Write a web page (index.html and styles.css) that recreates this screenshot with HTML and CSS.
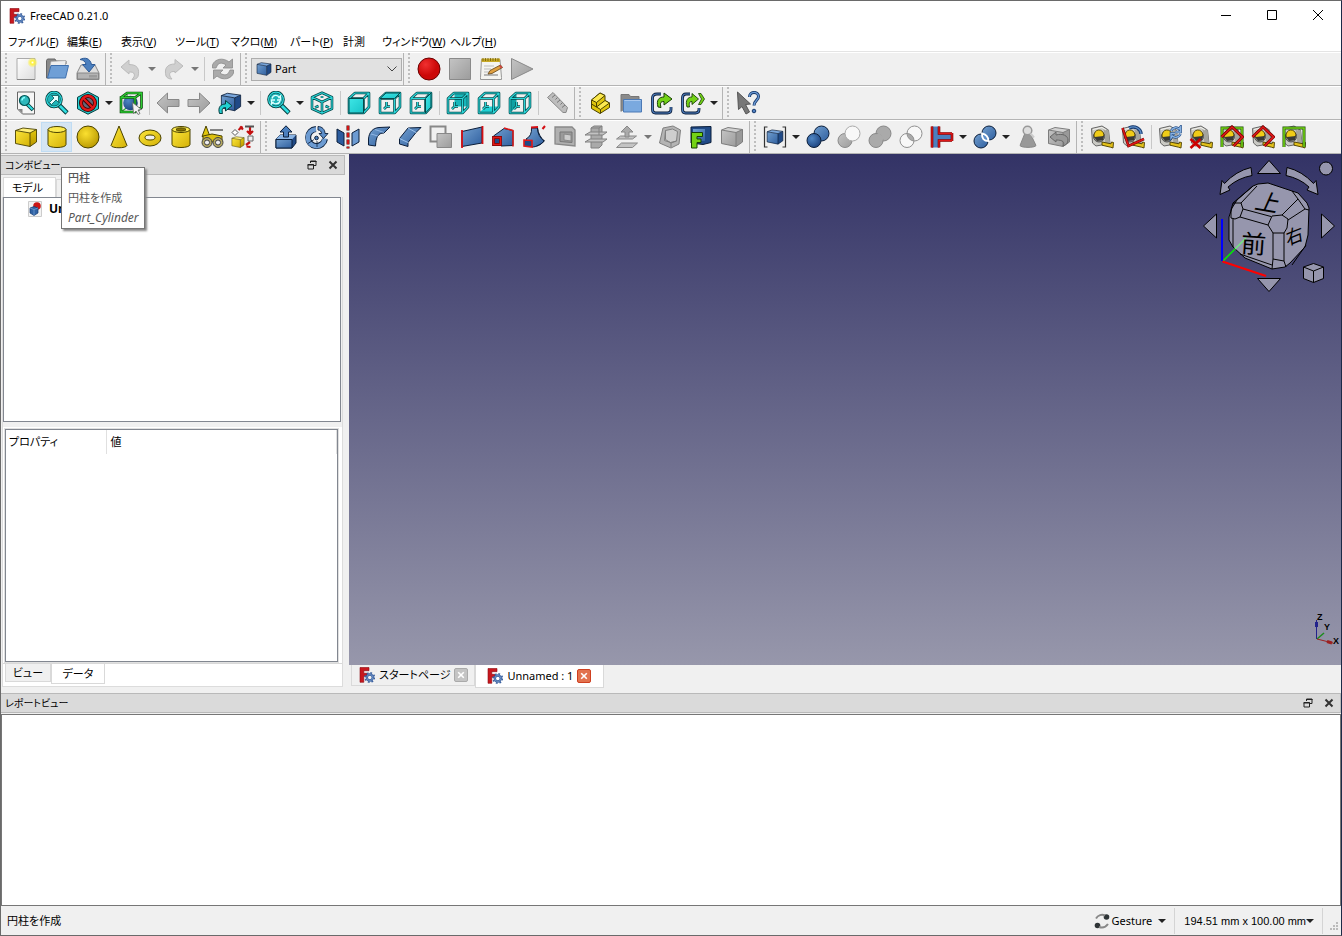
FILE: index.html
```
<!DOCTYPE html>
<html lang="ja">
<head>
<meta charset="utf-8">
<title>FreeCAD 0.21.0</title>
<link rel="stylesheet" href="styles.css">
</head>
<body>
<svg class="defs" aria-hidden="true">
<defs>
<linearGradient id="gy" x2="1" y2="1"><stop stop-color="#fbe63c"/><stop offset="1" stop-color="#d4b106"/></linearGradient>
<linearGradient id="gyd" x2="0" y2="1"><stop stop-color="#e0c60c"/><stop offset="1" stop-color="#b89600"/></linearGradient>
<linearGradient id="gb" x2="1" y2="1"><stop stop-color="#729fcf"/><stop offset="1" stop-color="#2f5f9f"/></linearGradient>
<linearGradient id="gg" x2="1" y2="1"><stop stop-color="#c4c4c4"/><stop offset="1" stop-color="#9c9c9c"/></linearGradient>
<linearGradient id="gt" x2="1" y2="1"><stop stop-color="#3ee6e6"/><stop offset="1" stop-color="#18c4c8"/></linearGradient>
<linearGradient id="gw" x2="1" y2="1"><stop stop-color="#fff"/><stop offset="1" stop-color="#ddd"/></linearGradient>
<radialGradient id="gr" cx=".35" cy=".3"><stop stop-color="#f03030"/><stop offset="1" stop-color="#cc0808"/></radialGradient>
<radialGradient id="sy" cx=".4" cy=".35" r=".7"><stop stop-color="#fbe030"/><stop offset="1" stop-color="#b89800"/></radialGradient>
<radialGradient id="sb" cx=".35" cy=".35" r=".7"><stop stop-color="#4f86c4"/><stop offset="1" stop-color="#1d4480"/></radialGradient>
<radialGradient id="glow"><stop stop-color="#fff"/><stop offset=".35" stop-color="#fff23a"/><stop offset="1" stop-color="#fff23a" stop-opacity=".1"/></radialGradient>
</defs>
<symbol id="logo" viewBox="0 0 16 16"><path d="M1 .5h9v3.200H4.800v2.600H8v3H4.800v6H1z" fill="#c8171e" stroke="#8a0a10" stroke-width=".6"/><g fill="none" stroke="#3c62a0"><circle cx="10.800" cy="10.500" r="3" stroke-width="2.400"/><circle cx="10.800" cy="10.500" r="4.700" stroke-width="1.500" stroke-dasharray="1.800 1.890"/></g><circle cx="10.800" cy="10.500" r="3" fill="none" stroke="#6c92c8" stroke-width="1"/></symbol>
<symbol id="new" viewBox="0 0 24 24"><path d="M3 1.500h18v21H3z" fill="url(#gw)" stroke="#aaa"/><path d="M3 22.500h18" stroke="#888"/><circle cx="18.500" cy="5.500" r="5" fill="url(#glow)"/></symbol>
<symbol id="open" viewBox="0 0 24 24"><path d="M1.500 3.500v17.500h3l3-14h13.500v-3H11l-1-2H2.500z" fill="#888" stroke="#666"/><path d="M6 4.500l15-1-1 6H5z" fill="#eee" stroke="#aaa" stroke-width=".6"/><path d="M6 8.500h17.500l-3 12.500H2.500z" fill="#6f9fd6" stroke="#3f70ae"/></symbol>
<symbol id="save" viewBox="0 0 24 24"><path d="M5 8h14l4 8v6.500H1V16z" fill="#ddd" stroke="#888"/><path d="M1.500 16h21v6h-21z" fill="#b4b4b4" stroke="#888"/><path d="M14 18v2.500m2-2.500v2.500m2-2.500v2.500m2-2.500v2.500" stroke="#777" stroke-width=".8"/><path d="M4 2.500c5-2.500 10-1.500 11.500 5H19l-6 7.500-6.500-7.500H10C9.500 4.500 7.500 3 4 2.500z" fill="#4b7fbe" stroke="#2d5a96"/></symbol>
<symbol id="undo" viewBox="0 0 24 24"><path d="M2 10l8-7v4.500c8 0 11 4 9 12-1 2-3 3-6 3 4-4 3-8-3-7.500V17z" fill="#cfcfcf" stroke="#bbb"/></symbol>
<symbol id="redo" viewBox="0 0 24 24"><path d="M21 9l-8-6.500V7C5 7 2 11.500 4 19c1 2 3 3 6 3-4-4-3-8 3-7.500V16z" fill="#cfcfcf" stroke="#bbb"/></symbol>
<symbol id="refresh" viewBox="0 0 24 24"><g fill="#aaa" stroke="#8a8a8a" stroke-width=".8"><path d="M1.500 11V8C3.500 2 12 0 18 5l3.500-3v9H12l3-3C11 5 7 6 6 9l-1 2z"/><path d="M22.500 13v3C20.500 22 12 24 6 19l-3.500 3v-9H12l-3 3c4 3 8 2 9-1l1-2z"/></g></symbol>
<symbol id="rec" viewBox="0 0 24 24"><circle cx="12" cy="12" r="11" fill="url(#gr)" stroke="#6a0000"/></symbol>
<symbol id="stop" viewBox="0 0 24 24"><path d="M1.500 1.500h21v21h-21z" fill="url(#gg)" stroke="#8a8a8a"/></symbol>
<symbol id="note" viewBox="0 0 24 24"><path d="M2.500 2.500h18.500l1.500 18v2h-21v-2z" fill="#f4f4f0" stroke="#999"/><path d="M2.500 1.500H21v3.500H2.500z" fill="#c8aa28"/><path d="M4 1v3m2.500-3v3M9 1v3m2.500-3v3M14 1v3m2.500-3v3M19 1v3" stroke="#665300" stroke-width=".7"/><path d="M5 9h10M5 12h7M5 15h5" stroke="#bbb"/><path d="M5 18h14" stroke="#777"/><path d="M9 17l2-3.500L21.500 8l2 2.500L13 16.500z" fill="#e0a040" stroke="#604010" stroke-width=".8"/><path d="M20 9l1.500-1 2 2.500-1.500 1z" fill="#c44"/></symbol>
<symbol id="play" viewBox="0 0 24 24"><path d="M1.500 1.500L23 12 1.500 22.500z" fill="url(#gg)" stroke="#8a8a8a"/></symbol>
<symbol id="mag" viewBox="0 0 24 24"><path d="M14.500 14.500l7.500 7.500" stroke="#053c3d" stroke-width="4.600"/><path d="M14.500 14.500l7 7" stroke="#2fdde0" stroke-width="2.600"/><circle cx="9" cy="8.500" r="7.500" fill="#1fb4b8" stroke="#053c3d" stroke-width="2.600"/><circle cx="9" cy="8.500" r="7.300" fill="none" stroke="#2fdde0" stroke-width="1.300"/></symbol>
<symbol id="fitall" viewBox="0 0 24 24"><path d="M3.500 1h17v22H8.500l-5-5z" fill="#f6f6f6" stroke="#666"/><path d="M4 18h4.500v4.500z" fill="#888"/><path d="M13 13l6 6" stroke="#053c3d" stroke-width="3.800"/><path d="M13 13l5.500 5.500" stroke="#2fdde0" stroke-width="2"/><circle cx="10.500" cy="9.500" r="5" fill="#2fb8bc" stroke="#055" stroke-width="1.200"/><path d="M8 9.500a3 3 0 013-3" stroke="#8ff" stroke-width="1.500" fill="none"/></symbol>
<symbol id="fitsel" viewBox="0 0 24 24"><use href="#mag"/><path d="M4.500 11.500l4.500-4.500-2.500-2.500h7v7L11 9l-4.500 4.500z" fill="#e8ffff" stroke="#055" stroke-width=".8"/></symbol>
<symbol id="magsync" viewBox="0 0 24 24"><use href="#mag"/><path d="M5 7.500c1-4 6-4 7-1l1.500-1.500v4H10M13 10c-1 3.500-6 3.500-7 1.500l-1.500 1.500V9H8" fill="none" stroke="#dff" stroke-width="1.400"/></symbol>
<symbol id="nodraw" viewBox="0 0 24 24"><path d="M12 .8l10.500 5.500v11.500L12 23.200 1.500 17.800V6.300z" fill="#25cdd0" stroke="#053c3d"/><circle cx="12" cy="12" r="7" fill="#667" stroke="#300" stroke-width="4"/><path d="M7 7l10 10" stroke="#300" stroke-width="4"/><circle cx="12" cy="12" r="7" fill="none" stroke="#e01818" stroke-width="2.400"/><path d="M7 7l10 10" stroke="#e01818" stroke-width="2.400"/></symbol>
<symbol id="bbox" viewBox="0 0 24 24"><path d="M8 2v14.500h14M8 16.500L2 21" fill="none" stroke="#26b32a" stroke-width="1.200"/><circle cx="11.500" cy="12" r="7.300" fill="url(#sb)"/><g fill="none"><path d="M2 6.500h14V21H2zM2 6.500L8 2h14.500v14.500L16 21M16 6.500L22.500 2" stroke="#063d06" stroke-width="2.600"/><path d="M2 6.500h14V21H2zM2 6.500L8 2h14.500v14.500L16 21M16 6.500L22.500 2" stroke="#2ccc32" stroke-width="1.300"/></g><path d="M13.500 11.500l9 7-3.500.5 2 3.500-2 1-2-3.500-2.500 2.500z" fill="#f4f4f4" stroke="#666" stroke-width=".8"/></symbol>
<symbol id="left" viewBox="0 0 24 24"><path d="M1 12L11.500 2v6.500H23v7H11.500V22z" fill="url(#gg)" stroke="#888"/></symbol>
<symbol id="right" viewBox="0 0 24 24"><path d="M23 12L12.500 2v6.500H1v7h11.500V22z" fill="url(#gg)" stroke="#888"/></symbol>
<symbol id="bcube" viewBox="0 0 24 24"><path d="M1.500 5L8 2.500l14.500 2-6.500 3z" fill="#7aa7dc"/><path d="M1.500 5L16 7.500v14l-14.500-3z" fill="url(#gb)"/><path d="M16 7.500l6.500-3V17L16 21.500z" fill="#204a87"/><path d="M1.500 5L8 2.500l14.500 2V17L16 21.500l-14.500-3zM1.500 5L16 7.500v14M16 7.500l6.500-3" fill="none" stroke="#0b1e3a" stroke-width=".9"/></symbol>
<symbol id="ycube" viewBox="0 0 24 24"><path d="M1.500 5.500L9 3l13.500 1.500L16 8z" fill="#fff07a"/><path d="M1.500 5.500L16 8v13.500l-14.500-3z" fill="url(#gy)"/><path d="M16 8l6.500-3.500v12.500L16 21.500z" fill="url(#gyd)"/><path d="M1.500 5.500L9 3l13.500 1.500v12.500L16 21.500l-14.500-3zM1.500 5.500L16 8v13.500M16 8l6.500-3.500" fill="none" stroke="#4a4200" stroke-width=".9"/></symbol>
<symbol id="gcube" viewBox="0 0 24 24"><path d="M1.500 5L8 2.500l14.500 2-6.500 3z" fill="#d2d2d2"/><path d="M1.500 5L16 7.500v14l-14.500-3z" fill="url(#gg)"/><path d="M16 7.500l6.500-3V17L16 21.500z" fill="#999"/><path d="M1.500 5L8 2.500l14.500 2V17L16 21.500l-14.500-3zM1.500 5L16 7.500v14M16 7.500l6.500-3" fill="none" stroke="#7d7d7d"/></symbol>
<symbol id="linknav" viewBox="0 0 24 24"><use href="#bcube" x="2" y="0" width="22" height="22"/><path d="M1.500 22.500C-.5 16 3 13 7.500 13V9.500l6.500 5.300-6.500 5.200v-3.500c-3 0-4 2-3 6z" fill="#22cfd2" stroke="#053c3d"/></symbol>
<symbol id="iso" viewBox="0 0 24 24"><g fill="none" stroke-linejoin="round"><path d="M12 1.800l10 4.500v11.500L12 22.200 2 17.800V6.300zM2 6.300L12 11l10-4.700M12 11v11M5 16.500l3.500-1.500m10.500 1.500l-3.500-1.500M12 5v2" stroke="#05484a" stroke-width="2.600"/><path d="M12 1.800l10 4.500v11.500L12 22.200 2 17.800V6.300zM2 6.300L12 11l10-4.700M12 11v11M5 16.500l3.500-1.500m10.500 1.500l-3.500-1.500M12 5v2" stroke="#2bd5d7" stroke-width="1.200"/></g></symbol>
<symbol id="wire" viewBox="0 0 24 24"><g fill="none" stroke-linejoin="round"><path d="M2 7.500h14.500v14.500H2zM2 7.500L8 2h14v14l-5.500 6M16.500 7.500L22 2M8.500 11v4M8.500 15.500L6 18M9 15.500h3" stroke="#05484a" stroke-width="2.600"/><path d="M2 7.500h14.500v14.500H2zM2 7.500L8 2h14v14l-5.500 6M16.500 7.500L22 2M8.500 11v4M8.500 15.500L6 18M9 15.500h3" stroke="#2bd5d7" stroke-width="1.200"/></g></symbol>
<symbol id="vfront" viewBox="0 0 24 24"><use href="#wire"/><path d="M2 7.500h14.500v14.500H2z" fill="url(#gt)" stroke="#05484a"/></symbol>
<symbol id="vtop" viewBox="0 0 24 24"><use href="#wire"/><path d="M2 7.500L8 2h14l-5.500 5.500z" fill="url(#gt)" stroke="#05484a"/></symbol>
<symbol id="vright" viewBox="0 0 24 24"><use href="#wire"/><path d="M16.500 7.500L22 2v14l-5.500 6z" fill="url(#gt)" stroke="#05484a"/></symbol>
<symbol id="vrear" viewBox="0 0 24 24"><path d="M8.500 2H22v13.500H8.500z" fill="#17b6ba"/><use href="#wire"/></symbol>
<symbol id="vbottom" viewBox="0 0 24 24"><path d="M2 22l6.500-6.500H22L16.500 22z" fill="#20d2d5"/><use href="#wire"/></symbol>
<symbol id="vleft" viewBox="0 0 24 24"><path d="M2 7.500L8.500 2v13.500L2 22z" fill="#0fa0a4"/><use href="#wire"/></symbol>
<symbol id="ruler" viewBox="0 0 24 24"><path d="M2.500 6.500L8 1.500l14.500 15-1.500 5h-3z" fill="#bdbdbd" stroke="#8a8a8a"/><path d="M10 4l-3 2.500M12.500 6.500l-2 2M15 9l-3 2.500M17.500 11.500l-2 2M20 14l-3 2.500" stroke="#777"/></symbol>
<symbol id="step" viewBox="0 0 24 24"><g stroke="#4a4200" stroke-linejoin="round"><path d="M3.500 9L12 2l5 2.500v5l4.500 2.500v4.500L12 22.500l-8.500-5z" fill="#e0c60c"/><path d="M3.500 9L12 2l5 2.500-8.500 7z" fill="#fce94f"/><path d="M8.500 16L17 9.500l4.500 2.500-9 6.500z" fill="#fce94f"/><path d="M8.500 11.500V16L3.500 13M12.500 18.500v4" fill="none"/></g></symbol>
<symbol id="folder" viewBox="0 0 24 24"><path d="M2 20.500V3.500h8l1.500 2H20v8" fill="#8a8a8a" stroke="#777"/><path d="M4.500 8.500h18v12.500h-18z" fill="#7aa9df" stroke="#4b79b5"/><path d="M5.500 9.500h16" stroke="#a9c8ee"/></symbol>
<symbol id="link" viewBox="0 0 24 24"><path d="M11 3H7Q2.500 3 2.500 7v11.500q0 3.500 3 3.500h12q3.500 0 3.500-3.500V16" fill="none" stroke="#0b1e3a" stroke-width="2.800"/><path d="M11 3H7Q2.500 3 2.500 7v11.500q0 3.500 3 3.500h12q3.500 0 3.500-3.500V16" fill="none" stroke="#4f7fc0" stroke-width="1.200"/><path d="M8 16C6 9 9 6 14 6V2l8 6-8 6v-3.500c-4 0-4 2-3 6z" fill="#73d216" stroke="#173f04"/></symbol>
<symbol id="links" viewBox="0 0 24 24"><path d="M9 3H5Q1.500 3 1.500 7v11.500q0 3.500 3 3.500h10q3.500 0 3.500-3.500V17" fill="none" stroke="#0b1e3a" stroke-width="2.800"/><path d="M9 3H5Q1.500 3 1.500 7v11.500q0 3.500 3 3.500h10q3.500 0 3.500-3.500V17" fill="none" stroke="#4f7fc0" stroke-width="1.200"/><path d="M6 16C4 9 7 6 11 6V2.500l6.500 5.500-6.500 5.500V10.500c-3 0-3 2-2.500 5.500z" fill="#73d216" stroke="#173f04" stroke-width=".9"/><path d="M17.500 2.500h2.500L23.500 8 20 13.500h-2.500L20.500 8z" fill="#73d216" stroke="#173f04" stroke-width=".8"/></symbol>
<symbol id="whats" viewBox="0 0 24 24"><path d="M1.500 1l13 12-5 .5 4 7.500-3.500 2-4-7.500-3.500 3z" fill="#777" stroke="#555"/><path d="M13.500 6c0-6 9-6 9-.5 0 4-4.500 4-4.500 9" fill="none" stroke="#16386b" stroke-width="3"/><path d="M13.500 6c0-6 9-6 9-.5 0 4-4.500 4-4.500 9" fill="none" stroke="#6b9ad4" stroke-width="1.300"/><circle cx="18" cy="20" r="1.800" fill="#4f7fc0" stroke="#16386b"/></symbol>
<symbol id="cyl" viewBox="0 0 24 24"><path d="M3 4.500v15c0 4 18 4 18 0v-15z" fill="url(#gy)" stroke="#4a4200"/><ellipse cx="12" cy="4.500" rx="9" ry="3" fill="#fbe94f" stroke="#4a4200"/></symbol>
<symbol id="sph" viewBox="0 0 24 24"><circle cx="12" cy="12" r="11" fill="url(#sy)" stroke="#4a4200"/></symbol>
<symbol id="cone" viewBox="0 0 24 24"><path d="M12 1L4 20.500c1 3 15 3 16 0z" fill="url(#gy)" stroke="#4a4200"/></symbol>
<symbol id="torus" viewBox="0 0 24 24"><path fill-rule="evenodd" d="M1 13a11 8 0 0022 0 11 8 0 00-22 0zM7 12.500a5 2.500 0 0010 0 5 2.500 0 00-10 0z" fill="url(#gy)" stroke="#4a4200"/></symbol>
<symbol id="tube" viewBox="0 0 24 24"><use href="#cyl"/><ellipse cx="12" cy="4.500" rx="5" ry="1.600" fill="#8a7300" stroke="#4a4200"/></symbol>
<symbol id="prims" viewBox="0 0 24 24"><path d="M6 1L2 11.500h8z" fill="#e0c60c" stroke="#4a4200"/><path d="M10 5h13" stroke="#777" stroke-width="1.800"/><path d="M3 11l9-2 10 2v6H3z" fill="#dcc010" stroke="#4a4200"/><circle cx="7" cy="17.500" r="5" fill="#b4a860" stroke="#444"/><circle cx="18" cy="17.500" r="5" fill="#b4a860" stroke="#444"/><circle cx="7" cy="17.500" r="2.500" fill="#eee" stroke="#444"/><circle cx="18" cy="17.500" r="2.500" fill="#eee" stroke="#444"/></symbol>
<symbol id="builder" viewBox="0 0 24 24"><use href="#ycube" x="0" y="10" width="14" height="14"/><path d="M4 4.500l3 3-3 3-3-3z" fill="#fff" stroke="#555"/><path d="M7.500 5l4-3.500M9 1.500l3 3M19 2v6m-3-2l3 3 3-3M15 20l4-3m-3.500 4.500l4 .5" stroke="#c41010" stroke-width="2.200"/><path d="M14 1.500h9" stroke="#555" stroke-width="2"/><path d="M17 11h5v5h-5z" fill="#eee" stroke="#666"/></symbol>
<symbol id="extrude" viewBox="0 0 24 24"><path d="M2 14l4-4h16v8l-4 5H2z" fill="#204a87" stroke="#0b1e3a"/><path d="M2 14l4-4h16l-4 4.500z" fill="#8ab4e4"/><path d="M2 14.500h16V23H2z" fill="url(#gb)" stroke="#0b1e3a"/><path d="M12 .8L18 7h-3.500v5h-5V7H6z" fill="#4b7fbe" stroke="#0b1e3a"/></symbol>
<symbol id="revolve" viewBox="0 0 24 24"><path d="M11 4A8.500 8.500 0 1020 14" fill="none" stroke="#0b1e3a" stroke-width="6"/><path d="M11 4.200A8.500 8.500 0 1019.800 13.500" fill="none" stroke="#6c9bd2" stroke-width="4.400"/><path d="M13 1.500c4 0 7 3 7 7h3l-4.500 5-4.500-5h2.500c0-2-1.500-3.500-3.500-3.500z" fill="#5d8fca" stroke="#0b1e3a" stroke-width=".9"/><circle cx="11.500" cy="13" r="1.800" fill="#4b7fbe" stroke="#0b1e3a"/><path d="M9 14.500l-6 4M12 16v6" stroke="#0b1e3a" stroke-width=".8"/></symbol>
<symbol id="mirror" viewBox="0 0 24 24"><path d="M1 4l7 4v13l-7-4z" fill="#2c5c9e" stroke="#0b1e3a"/><path d="M23 4l-7 4v13l7-4z" fill="#6c9bd2" stroke="#0b1e3a"/><path d="M12 .5v23" stroke="#500" stroke-width="3" stroke-dasharray="5 2"/><path d="M12 1v22" stroke="#e01818" stroke-width="1.800" stroke-dasharray="4 3"/></symbol>
<symbol id="fillet" viewBox="0 0 24 24"><path d="M1.500 14C2 7 6 3 12 2.500l11-.5-6 6c-6 0-8 4-8.500 13l-7-1z" fill="url(#gb)" stroke="#0b1e3a"/><path d="M4 9l7 2M8 4.500l9 3" stroke="#9dc3ee" stroke-width=".8"/></symbol>
<symbol id="chamfer" viewBox="0 0 24 24"><path d="M1.500 13.500L10 3l13-.5-5 5-8 10v4L1.500 19z" fill="url(#gb)" stroke="#0b1e3a"/><path d="M1.500 13.500l8.500 4M10 3l8 4.500" stroke="#9dc3ee"/></symbol>
<symbol id="face" viewBox="0 0 24 24"><path d="M1.500 1.500h15v15h-15z" fill="none" stroke="#888" stroke-width="2"/><path d="M8 8.500h14.500v14H8z" fill="url(#gg)" stroke="#888"/></symbol>
<symbol id="ruled" viewBox="0 0 24 24"><path d="M2 6.500l20-4.500v16L2 21.500z" fill="url(#gb)" stroke="#0b1e3a"/><path d="M2 5v18M22.500 1v18" stroke="#d40f14" stroke-width="1.800"/></symbol>
<symbol id="loft" viewBox="0 0 24 24"><path d="M2.500 11L13 3.500l9 2v15L10 21z" fill="url(#gb)" stroke="#0b1e3a"/><path d="M2.500 12.500h7v7h-7z" fill="#204a87" stroke="#7a0000" stroke-width="2.800"/><path d="M2.500 12.500h7v7h-7zM13 3l9 2.500V21.500" fill="none" stroke="#e01818" stroke-width="1.500"/></symbol>
<symbol id="sweep" viewBox="0 0 24 24"><path d="M4 14q6-3 5.500-11h6q0 8 6.500 13c-3 4-8 6-12 6z" fill="url(#gb)" stroke="#0b1e3a"/><path d="M2 15l8 .5V22l-8-1z" fill="#204a87" stroke="#e01818" stroke-width="1.600"/><path d="M15.500 3q1 8 7 13-4 4-8 5" fill="none" stroke="#0b1e3a"/><path d="M9 2.500l7-.5M20.500 4l2.500-3" fill="none" stroke="#d40f14" stroke-width="2"/></symbol>
<symbol id="section" viewBox="0 0 24 24"><path d="M2 2h17l3 3v16L2 19z" fill="#b0b0b0" stroke="#888" stroke-width="1.300"/><path d="M7 7h12v10.500l-12-1z" fill="#9a9a9a" stroke="#777"/><path d="M11 9l7 1v6l-7-1z" fill="#ccc" stroke="#888"/></symbol>
<symbol id="cross" viewBox="0 0 24 24"><path d="M7 3l3-2h8v19l-3 3H7z" fill="#aaa" stroke="#808080"/><path d="M1 10l5-3h17l-4 3zM1 17l5-3h17l-4 3z" fill="#c2c2c2" stroke="#808080"/><path d="M7 3h8v7M15 3l3-2" fill="none" stroke="#808080"/></symbol>
<symbol id="offset" viewBox="0 0 24 24"><path d="M1.500 22.500l5-4.500h16l-5 4.500zM1.500 14l4-3h16l-4 3z" fill="#c4c4c4" stroke="#888"/><path d="M12 1l6 6h-4v5h-4V7H6z" fill="#aaa" stroke="#888"/></symbol>
<symbol id="thick" viewBox="0 0 24 24"><path d="M5 3l10-2 7.500 4-1.500 14-8 4L1.500 18z" fill="#b4b4b4" stroke="#808080"/><path d="M7.500 5.500l7-1.500 5 2.500-1 9.500-6 1.500-6-2z" fill="#cecece" stroke="#808080"/><path d="M7.500 5.500v9l5.500 3.500 5.500-2M13 18v4" fill="none" stroke="#808080"/></symbol>
<symbol id="proj" viewBox="0 0 24 24"><path d="M2 2l20-.5v16l-8 2L2 18z" fill="#204a87" stroke="#0b1e3a"/><path d="M4 4h12v12H4z" fill="url(#gb)"/><path d="M2.500 7.500h11v4H8v2.500h4v3.500H8V23H2.500z" fill="#73d216" stroke="#173f04"/></symbol>
<symbol id="compound" viewBox="0 0 24 24"><use href="#bcube" x="3" y="3" width="18" height="18"/><path d="M4.500 2H1.500v20h3M19.500 2h3v20h-3" fill="none" stroke="#333" stroke-width="1.200"/></symbol>
<symbol id="bool" viewBox="0 0 24 24"><circle cx="15.500" cy="8.500" r="7.500" fill="url(#gb)" stroke="#0b1e3a"/><circle cx="8" cy="15.500" r="7" fill="url(#sb)" stroke="#0b1e3a"/></symbol>
<symbol id="cut" viewBox="0 0 24 24"><circle cx="8" cy="15.500" r="7" fill="url(#gg)" stroke="#8a8a8a"/><circle cx="15.500" cy="8.500" r="7.500" fill="#f8f8f8" stroke="#aaa"/></symbol>
<symbol id="union" viewBox="0 0 24 24"><g fill="#aaa" stroke="#888"><circle cx="15.500" cy="8.500" r="7.500"/><circle cx="8" cy="15.500" r="7"/></g><path d="M9 9.500l5.500 5.500" stroke="#aaa" stroke-width="5"/></symbol>
<symbol id="inter" viewBox="0 0 24 24"><circle cx="15.500" cy="8.500" r="7.500" fill="#f8f8f8"/><circle cx="8" cy="15.500" r="7" fill="#f8f8f8"/><path d="M8.200 8.500a7 7 0 016.800 7.400 7.500 7.500 0 01-6.800-7.400z" fill="#aaa"/><g fill="none" stroke="#909090"><circle cx="15.500" cy="8.500" r="7.500"/><circle cx="8" cy="15.500" r="7"/></g></symbol>
<symbol id="join" viewBox="0 0 24 24"><path d="M2 1.500h7v7h13v7H9v7H2z" fill="#4b7fbe"/><path d="M2 1.500v21M9 1.500v7h13M22 15.500H9v7M22 8v8" fill="none" stroke="#7a0000" stroke-width="2.600"/><path d="M2 1.500v21M9 1.500v7h13M22 15.500H9v7M22 8v8" fill="none" stroke="#e01818" stroke-width="1.300"/></symbol>
<symbol id="split" viewBox="0 0 24 24"><circle cx="16" cy="8" r="7" fill="url(#gb)" stroke="#0b1e3a"/><circle cx="8" cy="16" r="7" fill="url(#gb)" stroke="#0b1e3a"/><path d="M9 8.500q6 1 6.500 7.500-7 0-6.500-7.500z" fill="#5d8fca" stroke="#fff" stroke-width="1.800"/></symbol>
<symbol id="check" viewBox="0 0 24 24"><path d="M9 8L4 20.500c1 2.500 15 2.500 16 0L14 8z" fill="#999" stroke="#888"/><circle cx="11.500" cy="5.500" r="4.300" fill="#ddd" stroke="#999" stroke-width="1.500"/><path d="M14.500 8.500l3.500 4" stroke="#ccc" stroke-width="2"/></symbol>
<symbol id="defeat" viewBox="0 0 24 24"><use href="#gcube"/><path d="M3 12l6-5v3c7-2 12 1 12 5 0 3-2 5-5 6 2-4 0-6-7-6v2z" fill="#999" stroke="#666"/></symbol>
<symbol id="tape" viewBox="0 0 24 24"><path d="M1.500 3.500L12 1l6.500 4L20 18.500 6 21l-3.500-3z" fill="#c9c9c4" stroke="#666" stroke-linejoin="round"/><path d="M13.500 4l5 1L20 18.500l-4.500.8z" fill="#a4a49e"/><path d="M3 4.500l9-2 4 2.500" fill="none" stroke="#f2f2ee"/><circle cx="9" cy="11.500" r="5.500" fill="#8c8c86" stroke="#555"/><path d="M4 11a5 5.500 0 0110-1l-2 3H5z" fill="#f0cc18" stroke="#3c3200" stroke-width=".8"/><path d="M4.500 12l9.500-1-1 4-6 1z" fill="#3a3a36"/><path d="M12 17l9 1.800.5-1.800 2 .5-.5 5.500-2.500-.8-8.500-2z" fill="#e3c11a" stroke="#4a3d00" stroke-width=".9"/></symbol>
<symbol id="tang" viewBox="0 0 24 24"><use href="#tape"/><path d="M8 3c6-3 12 1 12 6" fill="none" stroke="#173b70" stroke-width="3.400"/><path d="M8 3c6-3 12 1 12 6" fill="none" stroke="#5d8fca" stroke-width="1.400"/><path d="M1.500 3l6 18 15.500-7" fill="none" stroke="#700" stroke-width="2.600"/><path d="M1.500 3l6 18 15.500-7" fill="none" stroke="#e01818" stroke-width="1.400"/></symbol>
<symbol id="trefresh" viewBox="0 0 24 24"><use href="#tape"/><path d="M13 6c2-4 6-4 8-2l1.500-2v5h-5M22.500 9c-2 4-6 4-8 2L13 13V8.500h4" fill="none" stroke="#214b85" stroke-width="2.600"/><path d="M13 6c2-4 6-4 8-2l1.500-2v5h-5M22.500 9c-2 4-6 4-8 2L13 13V8.500h4" fill="none" stroke="#88b2e2" stroke-width="1.300"/></symbol>
<symbol id="tclear" viewBox="0 0 24 24"><use href="#tape"/><path d="M1.500 14l10 9m0-9l-10 9" stroke="#c00" stroke-width="2.600"/></symbol>
<symbol id="gframe" viewBox="0 0 24 24"><path d="M2 22V3h20v19" fill="none" stroke="#1b4b05" stroke-width="3"/><path d="M2 22V3h20v19" fill="none" stroke="#73d216" stroke-width="1.600"/></symbol>
<symbol id="rdelta" viewBox="0 0 24 24"><path d="M1.500 12L12 2l10.500 10-9 9" fill="none" stroke="#700" stroke-width="3"/><path d="M1.500 12L12 2l10.500 10-9 9" fill="none" stroke="#e01818" stroke-width="1.600"/></symbol>
<symbol id="tall" viewBox="0 0 24 24"><use href="#tape"/><use href="#gframe"/><use href="#rdelta"/></symbol>
<symbol id="t3d" viewBox="0 0 24 24"><use href="#tape"/><use href="#rdelta"/></symbol>
<symbol id="tdelta" viewBox="0 0 24 24"><use href="#tape"/><use href="#gframe"/></symbol>
<symbol id="docicon" viewBox="0 0 16 16"><path d="M1.500.5h13v15h-13z" fill="#f3f3f3" stroke="#ccc"/><circle cx="10" cy="5" r="3.800" fill="#cc1616"/><path d="M3 7l4-1.500L11 7v5l-4 2.500L3 12z" fill="#2f62a4" stroke="#163a70" stroke-width=".7"/><path d="M3 7l4 1.500L11 7M7 8.500v6" stroke="#7aa7dc" stroke-width=".7" fill="none"/></symbol>
<symbol id="float" viewBox="0 0 10 10"><path d="M3.500 3V1H9v4.500H7M1 4.500h5.500V9H1z" fill="none" stroke="#222"/><path d="M3 1.500h6.500M.5 5h6.500" stroke="#222"/></symbol>
<symbol id="x" viewBox="0 0 10 10"><path d="M1.500 1.500l7 7m0-7l-7 7" stroke="currentColor" stroke-width="2"/></symbol>
<symbol id="gesture" viewBox="0 0 16 16"><circle cx="12.500" cy="4" r="2.800" fill="#2e3436"/><circle cx="3.500" cy="12.500" r="2.800" fill="#2e3436"/><path d="M2 5.500C4 2 8 1 11 2.500M14 11c-2.500 3.500-6 4-9 3" fill="none" stroke="#888" stroke-width="2"/></symbol>
</svg>

<div class="window">
  <header class="titlebar">
    <svg class="i16"><use href="#logo"/></svg>
    <h1>FreeCAD 0.21.0</h1>
    <div class="winbtns">
      <button aria-label="最小化"><svg viewBox="0 0 12 12"><path d="M1 5.500h10"/></svg></button>
      <button aria-label="最大化"><svg viewBox="0 0 12 12"><path d="M1.500.5h9v9h-9z"/></svg></button>
      <button aria-label="閉じる"><svg viewBox="0 0 12 12"><path d="M1 0l10 10M11 0L1 10"/></svg></button>
    </div>
  </header>
  <nav class="menubar">
    <button>ファイル(<u>F</u>)</button><button>編集(<u>E</u>)</button><button>表示(<u>V</u>)</button><button>ツール(<u>T</u>)</button><button>マクロ(<u>M</u>)</button><button>パート(<u>P</u>)</button><button>計測</button><button>ウィンドウ(<u>W</u>)</button><button>ヘルプ(<u>H</u>)</button>
  </nav>

  <div class="toolbars">
    <div class="toolrow">
      <div class="group"><button aria-label="新規"><svg><use href="#new"/></svg></button><button aria-label="開く"><svg><use href="#open"/></svg></button><button aria-label="保存"><svg><use href="#save"/></svg></button></div>
      <div class="group"><button class="drop off" aria-label="元に戻す"><svg><use href="#undo"/></svg></button><button class="drop off" aria-label="やり直す"><svg><use href="#redo"/></svg></button><i class="sep"></i><button aria-label="更新"><svg><use href="#refresh"/></svg></button></div>
      <div class="group"><label class="combo"><svg class="i16"><use href="#bcube"/></svg><select aria-label="ワークベンチ"><option>Part</option></select><svg class="chev" viewBox="0 0 10 6"><path d="M.5.5L5 5 9.500.5"/></svg></label></div>
      <div class="group last"><button aria-label="マクロの記録"><svg><use href="#rec"/></svg></button><button aria-label="記録の停止"><svg><use href="#stop"/></svg></button><button aria-label="マクロ"><svg><use href="#note"/></svg></button><button aria-label="マクロの実行"><svg><use href="#play"/></svg></button></div>
    </div>
    <div class="toolrow">
      <div class="group"><button aria-label="全てにフィット"><svg><use href="#fitall"/></svg></button><button aria-label="選択にフィット"><svg><use href="#fitsel"/></svg></button><button class="drop" aria-label="表示スタイル"><svg><use href="#nodraw"/></svg></button><button aria-label="境界ボックス"><svg><use href="#bbox"/></svg></button><i class="sep"></i><button aria-label="戻る"><svg><use href="#left"/></svg></button><button aria-label="進む"><svg><use href="#right"/></svg></button><button class="drop" aria-label="リンクへ移動"><svg><use href="#linknav"/></svg></button><i class="sep"></i><button class="drop" aria-label="ビューの同期"><svg><use href="#magsync"/></svg></button><button aria-label="アイソメトリック"><svg><use href="#iso"/></svg></button><i class="sep"></i><button aria-label="正面"><svg><use href="#vfront"/></svg></button><button aria-label="上面"><svg><use href="#vtop"/></svg></button><button aria-label="右面"><svg><use href="#vright"/></svg></button><i class="sep"></i><button aria-label="背面"><svg><use href="#vrear"/></svg></button><button aria-label="底面"><svg><use href="#vbottom"/></svg></button><button aria-label="左面"><svg><use href="#vleft"/></svg></button><i class="sep"></i><button aria-label="距離を測定"><svg><use href="#ruler"/></svg></button></div>
      <div class="group"><button aria-label="パーツを作成"><svg><use href="#step"/></svg></button><button aria-label="グループを作成"><svg><use href="#folder"/></svg></button><button aria-label="リンクを作成"><svg><use href="#link"/></svg></button><button class="drop" aria-label="リンクの操作"><svg><use href="#links"/></svg></button></div>
      <div class="group last"><button aria-label="これは何?"><svg><use href="#whats"/></svg></button></div>
    </div>
    <div class="toolrow">
      <div class="group"><button aria-label="直方体"><svg><use href="#ycube"/></svg></button><button class="hover" aria-label="円柱" aria-describedby="tip"><svg><use href="#cyl"/></svg></button><button aria-label="球体"><svg><use href="#sph"/></svg></button><button aria-label="円錐"><svg><use href="#cone"/></svg></button><button aria-label="トーラス"><svg><use href="#torus"/></svg></button><button aria-label="チューブ"><svg><use href="#tube"/></svg></button><button aria-label="プリミティブ"><svg><use href="#prims"/></svg></button><button aria-label="シェイプビルダー"><svg><use href="#builder"/></svg></button></div>
      <div class="group"><button aria-label="押し出し"><svg><use href="#extrude"/></svg></button><button aria-label="回転体"><svg><use href="#revolve"/></svg></button><button aria-label="鏡像"><svg><use href="#mirror"/></svg></button><button aria-label="フィレット"><svg><use href="#fillet"/></svg></button><button aria-label="面取り"><svg><use href="#chamfer"/></svg></button><button aria-label="面を作成"><svg><use href="#face"/></svg></button><button aria-label="線織面"><svg><use href="#ruled"/></svg></button><button aria-label="ロフト"><svg><use href="#loft"/></svg></button><button aria-label="スイープ"><svg><use href="#sweep"/></svg></button><button aria-label="断面"><svg><use href="#section"/></svg></button><button aria-label="複数断面"><svg><use href="#cross"/></svg></button><button class="drop off" aria-label="オフセット"><svg><use href="#offset"/></svg></button><button aria-label="厚み"><svg><use href="#thick"/></svg></button><button aria-label="投影"><svg><use href="#proj"/></svg></button><button aria-label="面の色"><svg><use href="#gcube"/></svg></button></div>
      <div class="group"><button class="drop" aria-label="コンパウンド"><svg><use href="#compound"/></svg></button><button aria-label="ブーリアン演算"><svg><use href="#bool"/></svg></button><button aria-label="切り取り"><svg><use href="#cut"/></svg></button><button aria-label="結合"><svg><use href="#union"/></svg></button><button aria-label="共通集合"><svg><use href="#inter"/></svg></button><button class="drop" aria-label="接続"><svg><use href="#join"/></svg></button><button class="drop" aria-label="分割"><svg><use href="#split"/></svg></button><button aria-label="形状チェック"><svg><use href="#check"/></svg></button><button aria-label="フィーチャー削除"><svg><use href="#defeat"/></svg></button></div>
      <div class="group last"><button aria-label="直線寸法"><svg><use href="#tape"/></svg></button><button aria-label="角度寸法"><svg><use href="#tang"/></svg></button><i class="sep"></i><button aria-label="計測を更新"><svg><use href="#trefresh"/></svg></button><button aria-label="計測を消去"><svg><use href="#tclear"/></svg></button><button aria-label="全て切り替え"><svg><use href="#tall"/></svg></button><button aria-label="3D切り替え"><svg><use href="#t3d"/></svg></button><button aria-label="差分切り替え"><svg><use href="#tdelta"/></svg></button></div>
    </div>
  </div>

  <main class="work">
    <aside class="dock">
      <div class="docktitle"><h2>コンボビュー</h2><button aria-label="フロート"><svg><use href="#float"/></svg></button><button aria-label="閉じる"><svg><use href="#x"/></svg></button></div>
      <div class="toptabs"><button class="on">モデル</button><button class="blank" aria-label="タスク"></button></div>
      <div class="pane">
        <div class="tree"><div class="node"><svg class="i16"><use href="#docicon"/></svg><b>Unnamed</b></div></div>
        <div class="lower">
          <div class="props">
            <table><thead><tr><th>プロパティ</th><th>値</th></tr></thead></table>
          </div>
          <div class="bottabs"><button>ビュー</button><button class="on">データ</button></div>
        </div>
      </div>
      <div class="tip" id="tip" role="tooltip"><b>円柱</b><span>円柱を作成</span><em>Part_Cylinder</em></div>
    </aside>

    <section class="mdi">
      <div class="view">
        <svg class="navcube" viewBox="-1 0 152 150">
          <g fill="#9696ad" stroke="#000" stroke-linejoin="round">
            <path d="M67.500 23.500L79 10.500l11.500 13zM67.500 128.500L79 141.500l11.500-13zM26.500 64v24L13.500 76zM131.500 64v24l13-12z"/>
            <path d="M61 17.500l1 8Q48 28 38 37l2 3-10 4.500 2-14 2.500 3Q46 21 61 17.500zM97 17.500l-1 8q14 3 23 11.500l-2 3 11 4.500-2-14-2.500 3Q112 21 97 17.500z"/>
            <circle cx="136" cy="18.500" r="6.500"/>
            <path d="M113.500 117l10-3.500 10 3.500v11.500l-10 4-10-4z"/><path d="M113.500 117l10 4 10-4M123.500 121v11.500" fill="none"/>
            <path d="M63 36l5-2 10-1 24 8 6 2 9 10 2 5-1 27-3 12-15 16-5 4-13 2-27-11-12-11-4-7V67l3-9 5-8z"/>
            <path d="M43 53h8l2 6-3 8-5 2-4-1v-8zM53 59l28 7.500M50 67l28 8M82 66l10-1 6 4-1 9-3 5H83l-5-8zM92 65l16-16 7 10-17 11M108 49l-6-8M115 59l4 1M83 83v26l11 2V83M83 109l-1 10M94 111l2 6M43 69v28M50 104l32 11M43 53l20-17M51 53l16-17M102 115l14-20" fill="none"/>
          </g>
          <path d="M33 111l12-12" stroke="#00f000" stroke-width="1.500"/><path d="M45 99l11-11" stroke="#70ec80" stroke-width="1.500"/>
          <path d="M32 69v42" stroke="#00f" stroke-width="2"/><path d="M32.500 111.500L76 126" stroke="#f00" stroke-width="2"/>
          <text x="51" y="103" font-size="25" transform="rotate(4 63 94)">前</text>
          <text x="64" y="59" font-size="23" font-style="italic" transform="rotate(10 66 57)">上</text>
          <text x="97" y="96" font-size="18" font-style="italic" transform="rotate(-22 97 96)">右</text>
        </svg>
        <svg class="axes" viewBox="0 0 28 36"><path d="M3.500 27V8" stroke="#22228c"/><path d="M3.500 15v-5" stroke="#22228c" stroke-width="3"/><path d="M4 27l7-6" stroke="#1c8c1c" stroke-width="1.500"/><path d="M4 27l16 4" stroke="#9c2020"/><path d="M14 29.500l5 1.500" stroke="#9c2020" stroke-width="3"/><text x="4" y="8">Z</text><text x="11" y="18">Y</text><text x="20" y="32">X</text></svg>
      </div>
      <div class="mditabs">
        <div class="mtab"><svg class="i16"><use href="#logo"/></svg><span>スタートページ</span><button class="gray" aria-label="閉じる"><svg><use href="#x"/></svg></button></div>
        <div class="mtab on"><svg class="i16"><use href="#logo"/></svg><span>Unnamed : 1</span><button aria-label="閉じる"><svg><use href="#x"/></svg></button></div>
      </div>
    </section>
  </main>

  <section class="report">
    <div class="docktitle"><h2>レポートビュー</h2><button aria-label="フロート"><svg><use href="#float"/></svg></button><button aria-label="閉じる"><svg><use href="#x"/></svg></button></div>
    <div class="log"></div>
  </section>

  <footer class="status">
    <span class="msg">円柱を作成</span>
    <button class="nav"><svg class="i16"><use href="#gesture"/></svg>Gesture<i class="tri"></i></button>
    <button class="dim">194.51 mm x 100.00 mm<i class="tri"></i></button>
    <svg class="grip" viewBox="0 0 9 9"><path d="M6 0h2v2H6zM3 3h2v2H3zM6 3h2v2H6zM0 6h2v2H0zM3 6h2v2H3zM6 6h2v2H6z"/></svg>
  </footer>
</div>
</body>
</html>
```
FILE: styles.css
```
* { box-sizing: border-box; }
body {
  margin: 0;
  font: 12px/16px "Noto Sans", "Noto Sans CJK JP", sans-serif;
  font-feature-settings: "palt";
  color: #000;
}
button {
  font: inherit;
  font-feature-settings: inherit;
  color: inherit;
  background: none;
  border: 0;
  padding: 0;
  margin: 0;
}
h1, h2 { margin: 0; font-size: 11px; font-weight: 400; }
svg { display: block; flex: none; }
.defs { position: absolute; width: 0; height: 0; }
.i16 { width: 16px; height: 16px; }

.window {
  height: 100vh;
  display: grid;
  grid-template-rows: 29px 22px auto minmax(0, 5fr) minmax(0, 2fr) 29px;
  grid-template-columns: minmax(0, 1fr);
  background: #f0f0f0;
  border: 1px solid #6a6a6a;
  border-right-color: #1c2a48;
}

.titlebar { display: flex; align-items: center; gap: 5px; padding-left: 8px; background: #fff; }
.winbtns { display: flex; margin-left: auto; height: 100%; }
.winbtns button { width: 46px; display: flex; align-items: center; justify-content: center; }
.winbtns svg { width: 12px; height: 12px; fill: none; stroke: #000; }

.menubar {
  display: grid;
  grid-template-columns: 59px 54px 54px 55px 60px 53px 39px 68px auto;
  justify-content: start;
  align-items: center;
  padding: 2px 0 0 7px;
  background: #fff;
  border-bottom: 1px solid #e4e4e4;
  font-size: 11px;
}
.menubar button { text-align: left; white-space: nowrap; }

.toolrow { display: flex; height: 34px; border-top: 1px solid #fff; border-bottom: 1px solid #b4b4b4; }
.group {
  display: flex;
  align-items: center;
  padding: 0 2px 0 9px;
  border-right: 1px solid #b4b4b4;
  background: radial-gradient(circle, #bebebe 1px, transparent 1px) 3px 3px / 4px 4px repeat-y;
}
.group.last { border-right: 0; }
.group button { width: 31px; height: 30px; padding: 0 3px 0 4px; display: flex; align-items: center; }
.group button svg { width: 24px; height: 24px; }
.group .drop { width: 43px; }
.drop::after, .tri {
  content: "";
  border: 4px solid transparent;
  border-top-color: #222;
  border-bottom-width: 0;
}
.drop::after { margin-left: 5px; }
.off::after { border-top-color: #777; }
.group .hover { background: #d5e5f3; box-shadow: inset 0 0 0 1px #c0dcf3; }
.sep { width: 6px; height: 24px; background: linear-gradient(#c8c8c8, #c8c8c8) center / 1px 100% no-repeat; }
.combo {
  display: flex;
  align-items: center;
  gap: 3px;
  width: 151px;
  height: 23px;
  margin-left: 1px;
  padding: 0 4px;
  border: 1px solid #adadad;
  background: #e1e1e1;
}
.group:has(.combo) { padding-right: 1px; }
.combo select { flex: 1; appearance: none; border: 0; padding: 0; background: none; font: inherit; font-size: 11px; color: #000; }
.combo .chev { width: 10px; height: 6px; fill: none; stroke: #444; }

.work { display: grid; grid-template-columns: 344px minmax(0, 1fr); gap: 4px; min-height: 0; }
.dock { display: flex; flex-direction: column; position: relative; padding: 1px 0 4px; min-height: 0; }
.docktitle {
  display: flex;
  align-items: center;
  height: 20px;
  flex: none;
  padding: 0 6px 0 4px;
  gap: 11px;
  background: #dadada;
  border: 1px solid #b9b9b9;
  border-left: 0;
}
.docktitle h2 { flex: 1; font-size: 10px; }
.docktitle svg { width: 10px; height: 10px; }
.docktitle button { color: #333; }

.toptabs { display: flex; height: 22px; padding: 2px 0 0 2px; align-items: flex-end; flex: none; font-size: 11px; }
.toptabs button { height: 18px; width: 52px; border: 1px solid #d9d9d9; border-bottom: 0; }
.toptabs .on { height: 20px; width: 53px; padding-right: 4px; background: #fff; }
.pane { flex: 1; min-height: 0; display: flex; flex-direction: column; margin: 0 2px 0 1px; border: 1px solid #dcdcdc; border-top: 0; }
.tree { flex: 226 1 0; margin-right: 1px; background: #fff; border: 1px solid #828790; }
.node { display: flex; align-items: center; gap: 6px; padding: 3px 0 0 23px; }
.lower { flex: 262 1 0; min-height: 0; display: flex; flex-direction: column; border-top: 5px solid #f0f0f0; background: #fff; }
.props { flex: 1; margin: 2px 4px 1px 2px; background: #fff; border: 1px solid #828790; outline: 1px solid #e0e0e0; }
.props table { width: 100%; border-collapse: collapse; font-size: 11px; }
.props th { height: 24px; padding: 0 4px; text-align: left; font-weight: 400; border-right: 1px solid #e0e0e0; }
.props th:first-child { width: 100px; padding: 0 3px; }
.bottabs { display: flex; height: 23px; align-items: flex-start; padding-left: 2px; border-top: 1px solid #d9d9d9; font-size: 11px; }
.bottabs button { height: 18px; width: 46px; background: #f0f0f0; border: 1px solid #d9d9d9; border-top: 0; }
.bottabs .on { height: 20px; width: 54px; background: #fff; }

.tip {
  position: absolute;
  left: 60px;
  top: 13px;
  width: 84px;
  padding: 0 0 0 6px;
  display: flex;
  flex-direction: column;
  background: #fff;
  border: 1px solid #767676;
  box-shadow: 2px 2px 2px #888;
  color: #575757;
  font-size: 11px;
  line-height: 20px;
  white-space: nowrap;
}
.tip b { font-weight: 500; }
.tip em { font-size: 12px; }

.mdi { display: flex; flex-direction: column; min-height: 0; }
.view { flex: 1; position: relative; background: linear-gradient(#333366, #9797ab); }
.navcube { position: absolute; right: 0; top: -4px; width: 152px; height: 150px; font-family: "Noto Sans CJK JP", sans-serif; }
.axes { position: absolute; right: 0; bottom: 17px; width: 28px; height: 36px; font: bold 9px "Liberation Sans", sans-serif; }
.mditabs { display: flex; height: 26px; align-items: flex-start; padding-left: 2px; }
.mtab { display: flex; align-items: center; gap: 4px; height: 21px; padding: 0 6px 0 7px; border: 1px solid #d9d9d9; border-top: 0; }
.mtab span { font-size: 11px; white-space: nowrap; }
.mtab.on { height: 23px; background: #fff; padding: 0 12px 0 11px; }
.mtab button { width: 14px; height: 14px; padding: 2px; border-radius: 2px; background: #e2724e; border: 1px solid #cf4020; color: #fff; }
.mtab button.gray { background: #c4c4c4; border-color: #aaa; }
.mtab button svg { width: 8px; height: 8px; }

.report { display: flex; flex-direction: column; padding-top: 2px; min-height: 0; }
.report .docktitle { margin-bottom: 1px; }
.log { flex: 1; background: #fff; border: 1px solid #767676; }

.status { display: flex; align-items: center; font-size: 11px; padding-left: 6px; }
.msg { flex: 1; }
.status button { display: flex; align-items: center; height: 26px; border-right: 1px solid #d4d4d4; }
.status .nav { gap: 2px; padding-right: 8px; }
.nav .tri { margin-left: 4px; }
.status .dim { padding: 0 8px 0 9px; font-family: "Liberation Sans", sans-serif; }
.grip { width: 9px; height: 9px; margin: 12px 2px 0 7px; fill: #bbb; }
```
